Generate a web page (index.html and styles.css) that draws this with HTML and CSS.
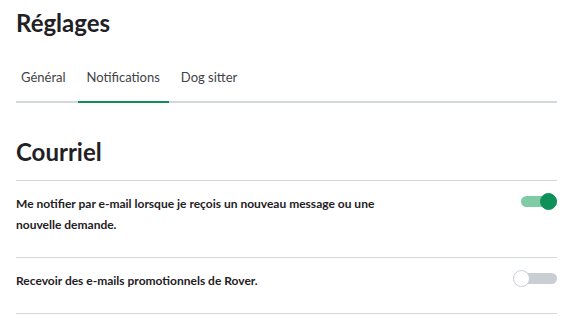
FILE: index.html
```html
<!DOCTYPE html>
<html lang="fr">
<head>
    <meta charset="UTF-8">
    <meta name="viewport" content="width=device-width, initial-scale=1.0">
    <title>Réglages</title>
    <link rel="stylesheet" href="styles.css">
</head>
<body>
    <div class="page">
        <h1 class="title">Réglages</h1>

        <div class="tabs">
            <div class="tab">Général</div>
            <div class="tab active">Notifications</div>
            <div class="tab">Dog sitter</div>
        </div>

        <h2 class="section-title">Courriel</h2>

        <div class="setting">
            <p class="setting-text">Me notifier par e-mail lorsque je reçois un nouveau message ou une nouvelle demande.</p>
            <div class="toggle on"><span class="track"></span><span class="knob"></span></div>
        </div>

        <div class="setting">
            <p class="setting-text">Recevoir des e-mails promotionnels de Rover.</p>
            <div class="toggle"><span class="track"></span><span class="knob"></span></div>
        </div>
    </div>
</body>
</html>
```

FILE: styles.css
```css
body {
    font-family: Lato, "Noto Sans", sans-serif;
    margin: 0;
    padding: 0;
    color: #1f2124;
    background: #fff;
}

.page {
    padding: 7px 16px 0 16px;
}

.title {
    margin: 0;
    font-size: 24px;
    line-height: 32px;
    font-weight: 700;
}

.tabs {
    display: flex;
    gap: 3px;
    margin-top: 28px;
    border-bottom: 2px solid #d1d9de;
}

.tab {
    padding: 0 9px 14px 9px;
    font-size: 13px;
    line-height: 20px;
    color: #404347;
    border-bottom: 2px solid transparent;
    margin-bottom: -2px;
}

.tab:first-child {
    margin-left: -4px;
}

.tab.active {
    border-bottom-color: #0d9158;
}

.section-title {
    margin: 35px 0 0 0;
    font-size: 24px;
    line-height: 28px;
    font-weight: 700;
    padding-bottom: 14px;
    border-bottom: 1px solid #d1d9de;
}

.setting {
    display: flex;
    justify-content: space-between;
    align-items: flex-start;
    padding: 12px 0 22px 0;
    border-bottom: 1px solid #d1d9de;
}

.setting-text {
    margin: 0;
    max-width: 400px;
    font-size: 12px;
    line-height: 21px;
    font-weight: 700;
}

.toggle {
    position: relative;
    width: 44px;
    height: 17px;
    margin-top: 0;
}

.toggle .track {
    position: absolute;
    left: 8px;
    right: 0;
    top: 3px;
    height: 11px;
    border-radius: 6px;
    background: #c9ced5;
}

.toggle .knob {
    position: absolute;
    left: 0;
    top: 0;
    width: 15px;
    height: 15px;
    border-radius: 50%;
    background: #fff;
    border: 1px solid #c9ced5;
}

.toggle.on .track {
    background: #7ecba6;
}

.toggle.on .knob {
    left: 27px;
    background: #0d9158;
    border-color: #0d9158;
}
```
